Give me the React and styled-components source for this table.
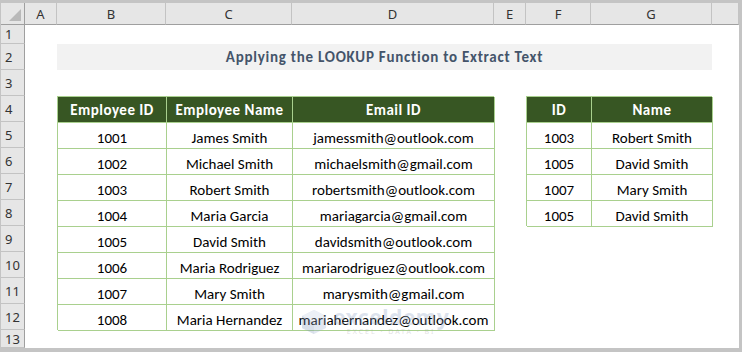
import React from 'react'
import styled, { createGlobalStyle } from 'styled-components'

const GlobalStyle = createGlobalStyle`
  html, body {
    margin: 0;
    padding: 0;
    background: #ffffff;
  }
  * {
    box-sizing: border-box;
  }
`

const COLS = [24, 32, 109, 126, 202, 32, 65, 121, 27]
const ROWS = [22, 19, ...Array(11).fill(26), 18]
const LETTERS = ['A', 'B', 'C', 'D', 'E', 'F', 'G', '']

const Frame = styled.div`
  width: 742px;
  height: 352px;
  border-style: solid;
  border-color: #c4c4c4;
  border-width: 3px 3px 4px 1px;
  background: #ffffff;
  position: relative;
  overflow: hidden;
`

const Sheet = styled.div`
  display: grid;
  grid-template-columns: ${COLS.map((c) => c + 'px').join(' ')};
  grid-template-rows: ${ROWS.map((r) => r + 'px').join(' ')};
`

const Corner = styled.div`
  grid-column: 1;
  grid-row: 1;
  background: #e6e6e6;
  border-right: 1px solid #9f9f9f;
  border-bottom: 1px solid #9f9f9f;
  display: flex;
  align-items: flex-end;
  justify-content: flex-end;
  padding: 0 3px 3px 0;
`

const CornerMark = styled.div`
  width: 0;
  height: 0;
  border-left: 12px solid transparent;
  border-bottom: 12px solid #b9b9b9;
`

const ColHead = styled.div`
  grid-column: ${({ $col }) => $col};
  grid-row: 1;
  background: #e6e6e6;
  border-right: 1px solid #c3c3c3;
  border-bottom: 1px solid #9f9f9f;
  display: flex;
  align-items: center;
  justify-content: center;
  font-family: 'Noto Sans', 'Open Sans', sans-serif;
  font-size: 13px;
  color: #333333;
`

const RowHead = styled.div`
  grid-column: 1;
  grid-row: ${({ $row }) => $row};
  background: #e6e6e6;
  border-right: 1px solid #9f9f9f;
  border-bottom: 1px solid #c3c3c3;
  display: flex;
  align-items: center;
  padding-left: 4px;
  font-family: 'Noto Sans', 'Open Sans', sans-serif;
  font-size: 13px;
  color: #333333;
`

const Title = styled.div`
  grid-column: 3 / 9;
  grid-row: 3;
  background: #f2f2f2;
  display: flex;
  align-items: center;
  justify-content: center;
  font-family: Carlito, Lato, sans-serif;
  font-weight: 700;
  font-size: 15px;
  letter-spacing: 0.75px;
  color: #44546a;
`

const Table = styled.div`
  grid-column: ${({ $cols }) => $cols};
  grid-row: ${({ $rows }) => $rows};
  display: grid;
  grid-template-columns: ${({ $widths }) => $widths.map((w) => w + 'px').join(' ')};
  grid-auto-rows: 26px;
  border-top: 1px solid #a9d08e;
  border-left: 1px solid #a9d08e;
  font-family: Carlito, Lato, sans-serif;
  font-size: 15px;
`

const Cell = styled.div`
  border-right: 1px solid #a9d08e;
  border-bottom: 1px solid #a9d08e;
  display: flex;
  align-items: center;
  justify-content: center;
  white-space: nowrap;
  background: ${({ $head }) => ($head ? '#375623' : '#ffffff')};
  color: ${({ $head }) => ($head ? '#ffffff' : '#000000')};
  font-weight: ${({ $head }) => ($head ? 700 : 400)};
  letter-spacing: ${({ $head }) => ($head ? '0.5px' : '0')};
  padding-top: ${({ $head }) => ($head ? '0' : '4px')};
`

const Watermark = styled.div`
  position: absolute;
  left: 299px;
  top: 304px;
  display: flex;
  align-items: center;
  gap: 5px;
  opacity: 0.3;
  pointer-events: none;
`

const Brand = styled.div`
  display: flex;
  flex-direction: column;
  align-items: center;
  font-family: 'Noto Sans', sans-serif;
  color: #8fa3c4;
`

const BrandName = styled.div`
  font-size: 21px;
  font-weight: 700;
  line-height: 20px;
  letter-spacing: 0.5px;
`

const BrandTag = styled.div`
  font-size: 7px;
  letter-spacing: 2px;
  line-height: 9px;
  color: #a0a0a0;
`

const employees = [
  ['1001', 'James Smith', 'jamessmith@outlook.com'],
  ['1002', 'Michael Smith', 'michaelsmith@gmail.com'],
  ['1003', 'Robert Smith', 'robertsmith@outlook.com'],
  ['1004', 'Maria Garcia', 'mariagarcia@gmail.com'],
  ['1005', 'David Smith', 'davidsmith@outlook.com'],
  ['1006', 'Maria Rodriguez', 'mariarodriguez@outlook.com'],
  ['1007', 'Mary Smith', 'marysmith@gmail.com'],
  ['1008', 'Maria Hernandez', 'mariahernandez@outlook.com'],
]

const results = [
  ['1003', 'Robert Smith'],
  ['1005', 'David Smith'],
  ['1007', 'Mary Smith'],
  ['1005', 'David Smith'],
]

function Logo() {
  return (
    <svg width="28" height="26" viewBox="0 0 28 26">
      <path d="M14 1 L26 7 L26 19 L14 25 L2 19 L2 7 Z" fill="#9fb2d3" />
      <path d="M14 1 L26 7 L14 13 L2 7 Z" fill="#c3cfe4" />
      <path d="M14 13 L14 25 L2 19 L2 7 Z" fill="#8497bb" />
    </svg>
  )
}

export default function App() {
  return (
    <Frame>
      <GlobalStyle />
      <Sheet>
        <Corner>
          <CornerMark />
        </Corner>
        {LETTERS.map((l, i) => (
          <ColHead key={i} $col={i + 2}>{l}</ColHead>
        ))}
        {ROWS.slice(1).map((_, i) => (
          <RowHead key={i} $row={i + 2}>{i + 1}</RowHead>
        ))}
        <Title>Applying the LOOKUP Function to Extract Text</Title>
        <Table $cols="3 / 6" $rows="5 / 14" $widths={[109, 126, 202]}>
          <Cell $head>Employee ID</Cell>
          <Cell $head>Employee Name</Cell>
          <Cell $head>Email ID</Cell>
          {employees.map((e) => e.map((v, j) => <Cell key={e[0] + j}>{v}</Cell>))}
        </Table>
        <Table $cols="7 / 9" $rows="5 / 10" $widths={[65, 121]}>
          <Cell $head>ID</Cell>
          <Cell $head>Name</Cell>
          {results.map((r, i) => r.map((v, j) => <Cell key={i + '-' + j}>{v}</Cell>))}
        </Table>
      </Sheet>
      <Watermark>
        <Logo />
        <Brand>
          <BrandName>exceldemy</BrandName>
          <BrandTag>EXCEL · DATA · BI</BrandTag>
        </Brand>
      </Watermark>
    </Frame>
  )
}
